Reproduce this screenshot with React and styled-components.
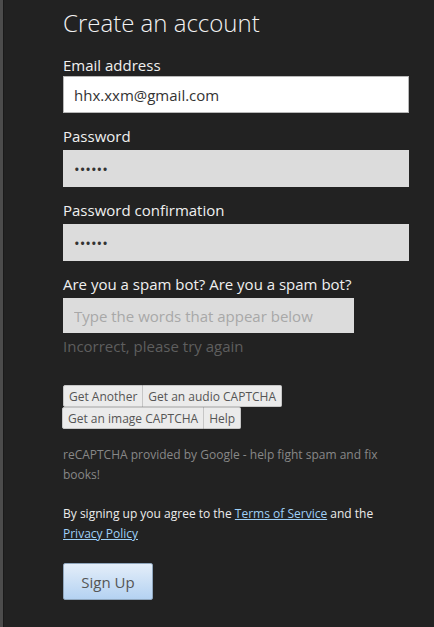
import styled, { createGlobalStyle } from "styled-components";

const GlobalStyle = createGlobalStyle`
  html, body {
    margin: 0;
    padding: 0;
    background: #222222;
  }
  body {
    font-family: "Open Sans", "Liberation Sans", sans-serif;
  }
`;

const Page = styled.div`
  display: flex;
  min-height: 627px;
  background: #222222;
`;

const Strip = styled.div`
  width: 3px;
  flex-shrink: 0;
  background: #4c4c4c;
  border-right: 1px solid #1a1a1a;
`;

const Main = styled.main`
  width: 346px;
  padding: 5px 0 0 59px;
  display: flex;
  flex-direction: column;
`;

const Title = styled.h1`
  margin: 0 0 14px;
  font-size: 24px;
  font-weight: 300;
  line-height: 36px;
  color: #f2f2f2;
`;

const Field = styled.div`
  display: flex;
  flex-direction: column;
  margin-bottom: 13px;
`;

const Label = styled.label`
  font-size: 15px;
  line-height: 21px;
  color: #f0f0f0;
  margin-bottom: ${(p) => (p.$tight ? "0" : "3px")};
`;

const Input = styled.input`
  box-sizing: border-box;
  width: ${(p) => p.$width || "346px"};
  height: ${(p) => p.$height || "37px"};
  padding: 0 10px;
  font-family: inherit;
  font-size: 15px;
  color: #333;
  background: ${(p) => (p.$white ? "#ffffff" : "#dcdcdc")};
  border: 1px solid ${(p) => (p.$white ? "#b8b8b8" : "#dcdcdc")};
  outline: none;
  &::placeholder {
    color: #a8a8a8;
  }
`;

const Hint = styled.div`
  margin-top: 3px;
  font-size: 15px;
  line-height: 21px;
  color: #5e5e5e;
`;

const Controls = styled.div`
  margin-top: 15px;
  display: flex;
  flex-direction: column;
  align-items: flex-start;
`;

const ButtonRow = styled.div`
  display: flex;
  margin-left: ${(p) => p.$shift || "0"};
`;

const SmallButton = styled.button`
  height: 22px;
  padding: 0 5px;
  font-family: inherit;
  font-size: 12px;
  color: #555;
  background: #ebebeb;
  border: 1px solid #c6c6c6;
  border-left-width: ${(p) => (p.$first ? "1px" : "0")};
  border-radius: ${(p) => (p.$first ? "2px 0 0 2px" : p.$last ? "0 2px 2px 0" : "0")};
`;

const Note = styled.p`
  margin: ${(p) => p.$top || "16px"} 0 0;
  font-size: 12px;
  line-height: 20px;
  color: ${(p) => p.$color || "#888"};
  width: 340px;
`;

const Link = styled.a`
  color: #9fd0f7;
  text-decoration: underline;
`;

const SignUp = styled.button`
  margin-top: 19px;
  align-self: flex-start;
  width: 90px;
  height: 37px;
  font-family: inherit;
  font-size: 15px;
  color: #555;
  background: linear-gradient(#e4eef9, #b4d2f2);
  border: 1px solid #8fa6bd;
  border-radius: 2px;
`;

export default function App() {
  return (
    <Page>
      <GlobalStyle />
      <Strip />
      <Main>
        <Title>Create an account</Title>
        <Field>
          <Label $tight>Email address</Label>
          <Input $white defaultValue="hhx.xxm@gmail.com" />
        </Field>
        <Field>
          <Label>Password</Label>
          <Input type="password" defaultValue="secret" />
        </Field>
        <Field>
          <Label>Password confirmation</Label>
          <Input type="password" defaultValue="secret" />
        </Field>
        <Field>
          <Label>Are you a spam bot? Are you a spam bot?</Label>
          <Input $width="291px" $height="35px" placeholder="Type the words that appear below" />
          <Hint>Incorrect, please try again</Hint>
        </Field>
        <Controls>
          <ButtonRow>
            <SmallButton $first>Get Another</SmallButton>
            <SmallButton $last>Get an audio CAPTCHA</SmallButton>
          </ButtonRow>
          <ButtonRow $shift="-1px">
            <SmallButton $first>Get an image CAPTCHA</SmallButton>
            <SmallButton $last>Help</SmallButton>
          </ButtonRow>
        </Controls>
        <Note>reCAPTCHA provided by Google - help fight spam and fix books!</Note>
        <Note $color="#ececec" $top="19px">
          By signing up you agree to the <Link href="#">Terms of Service</Link> and the{" "}
          <Link href="#">Privacy Policy</Link>
        </Note>
        <SignUp>Sign Up</SignUp>
      </Main>
    </Page>
  );
}
